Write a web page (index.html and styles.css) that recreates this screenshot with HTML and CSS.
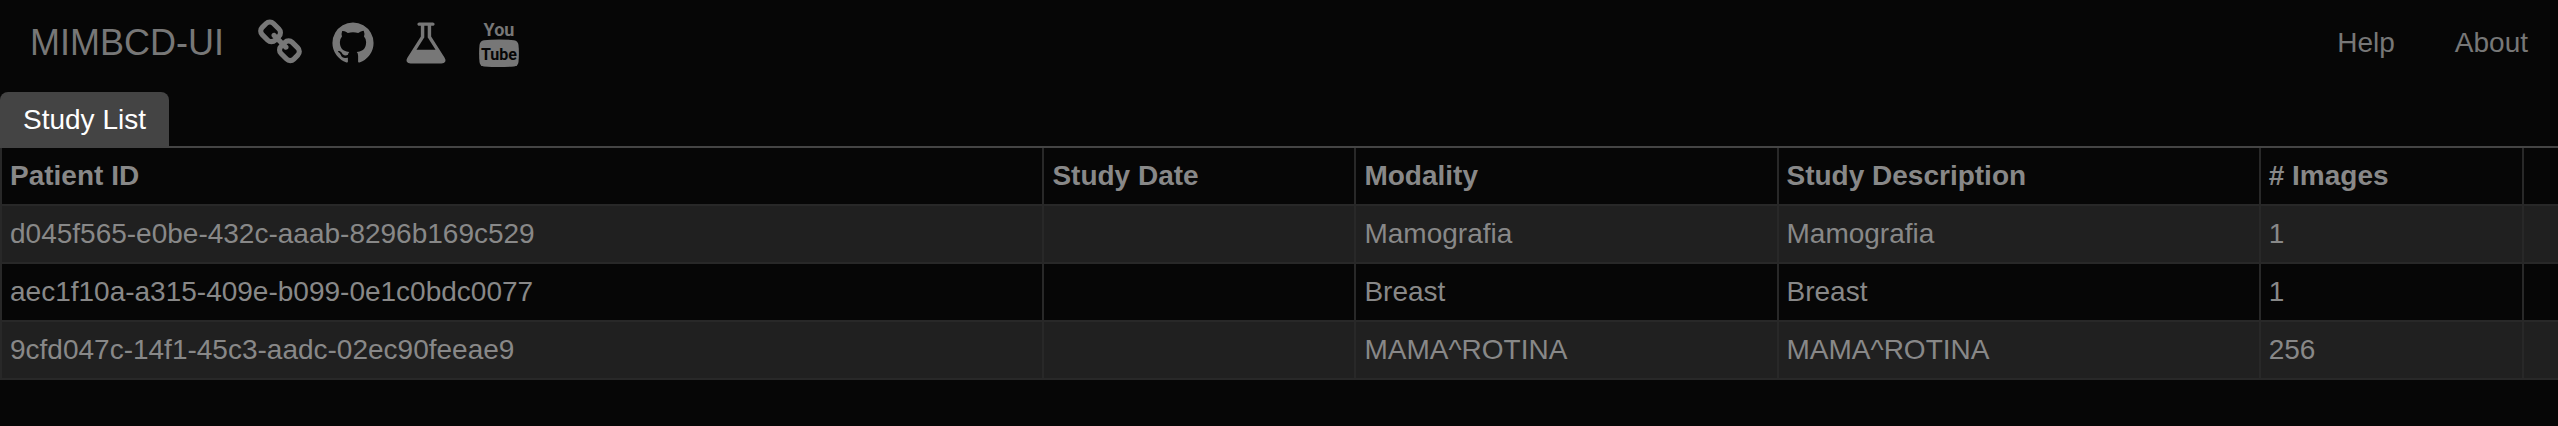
FILE: index.html
```html
<!DOCTYPE html>
<html lang="en">
<head>
<meta charset="utf-8">
<title>MIMBCD-UI</title>
<link rel="stylesheet" href="styles.css">
</head>
<body>
<nav class="navbar">
  <a class="brand" href="#">MIMBCD-UI</a>
  <div class="icon-links">
    <a class="icon-link" href="#" aria-label="Website">
      <svg class="icon" viewBox="0 0 1792 1792"><path d="M1520 1216q0-40-28-68l-208-208q-28-28-68-28-42 0-72 32 3 3 19 18.5t21.5 21.5 15 19 13 25.5 3.5 27.5q0 40-28 68t-68 28q-15 0-27.5-3.5t-25.5-13-19-15-21.5-21.5-18.5-19q-33 31-33 73 0 40 28 68l206 207q27 27 68 27 40 0 68-26l147-146q28-28 28-67zm-703-705q0-40-28-68l-206-207q-28-28-68-28-39 0-68 27l-147 146q-28 28-28 67 0 40 28 68l208 208q27 27 68 27 42 0 72-31-3-3-19-18.5t-21.5-21.5-15-19-13-25.5-3.5-27.5q0-40 28-68t68-28q15 0 27.5 3.5t25.5 13 19 15 21.5 21.5 18.5 19q33-31 33-73zm895 705q0 120-85 203l-147 146q-83 83-203 83-121 0-204-85l-206-207q-83-83-83-203 0-123 88-209l-88-88q-86 88-208 88-120 0-204-84l-208-208q-84-84-84-204t85-203l147-146q83-83 203-83 121 0 204 85l206 207q83 83 83 203 0 123-88 209l88 88q86-88 208-88 120 0 204 84l208 208q84 84 84 204z"/></svg>
    </a>
    <a class="icon-link" href="#" aria-label="GitHub">
      <svg class="icon" viewBox="0 0 1792 1792"><path d="M896 128q209 0 385.5 103t279.5 279.5 103 385.5q0 251-146.5 451.5t-378.5 277.5q-27 5-40-7t-13-30q0-3 .5-76.5t.5-134.5q0-97-52-142 57-6 102.5-18t94-39 81-66.500 53-105 20.5-150.500q0-119-79-206 37-91-8-204-28-9-81 11t-92 44l-38 24q-93-26-192-26t-192 26q-16-11-42.5-27t-83.5-38.500-85-13.500q-45 113-8 204-79 87-79 206 0 85 20.5 150t52.500 105 80.500 67 94 39 102.500 18q-39 36-49 103-21 10-45 15t-57 5-65.500-21.500-55.500-62.500q-19-32-48.500-52t-49.500-24l-20-3q-21 0-29 4.500t-5 11.500 9 14 13 12l7 5q22 10 43.500 38t31.500 51l10 23q13 38 44 61.500t67 30 69.500 7 55.500-3.500l23-4q0 38 .5 88.500t.5 54.500q0 18-13 30t-40 7q-232-77-378.500-277.500t-146.500-451.500q0-209 103-385.500t279.500-279.500 385.500-103z"/></svg>
    </a>
    <a class="icon-link" href="#" aria-label="Research">
      <svg class="icon" viewBox="0 0 1792 1792"><path d="M1591 1448q56 89 21.5 152.5t-140.5 63.5h-1152q-106 0-140.5-63.5t21.5-152.5l503-793v-399h-64q-26 0-45-19t-19-45 19-45 45-19h512q26 0 45 19t19 45-19 45-45 19h-64v399zm-779-725l-272 429h712l-272-429-20-31v-436h-128v436z"/></svg>
    </a>
    <a class="icon-link" href="#" aria-label="YouTube">
      <svg class="icon" viewBox="0 0 48 48">
        <text class="logo-you" x="24" y="17">You</text>
        <path d="M24 20.500Q33 20.500 39 21.200Q43 21.700 43.500 26Q44.300 34 43.500 43Q43 47 39 47.500Q24 48.500 9 47.500Q5 47 4.500 43Q3.700 34 4.500 26Q5 21.700 9 21.200Q15 20.500 24 20.500z"/>
        <text class="logo-tube" x="24" y="41">Tube</text>
      </svg>
    </a>
  </div>
  <div class="nav-links">
    <a class="nav-link" href="#">Help</a>
    <a class="nav-link" href="#">About</a>
  </div>
</nav>
<div class="tabs" role="tablist">
  <button class="tab" type="button" role="tab" aria-selected="true">Study List</button>
</div>
<table class="studies">
  <colgroup>
    <col class="col-patient"><col class="col-date"><col class="col-modality"><col class="col-description"><col class="col-images"><col>
  </colgroup>
  <thead>
    <tr><th>Patient ID</th><th>Study Date</th><th>Modality</th><th>Study Description</th><th># Images</th><th></th></tr>
  </thead>
  <tbody>
    <tr><td>d045f565-e0be-432c-aaab-8296b169c529</td><td></td><td>Mamografia</td><td>Mamografia</td><td>1</td><td></td></tr>
    <tr><td>aec1f10a-a315-409e-b099-0e1c0bdc0077</td><td></td><td>Breast</td><td>Breast</td><td>1</td><td></td></tr>
    <tr><td>9cfd047c-14f1-45c3-aadc-02ec90feeae9</td><td></td><td>MAMA^ROTINA</td><td>MAMA^ROTINA</td><td>256</td><td></td></tr>
  </tbody>
</table>
</body>
</html>
```
FILE: styles.css
```css
* {
  box-sizing: border-box;
}

body {
  margin: 0;
  background: #060606;
  color: #888;
  font-family: "Liberation Sans", Arial, sans-serif;
  font-size: 28px;
  line-height: 40px;
}

a {
  color: #777;
  text-decoration: none;
}

.navbar {
  display: flex;
  align-items: center;
  height: 86px;
  margin-bottom: 6px;
  padding: 0 30px;
}

.brand {
  font-size: 36px;
}

.icon-links {
  display: flex;
  gap: 25px;
  margin-left: 32px;
}

.icon-link {
  display: flex;
}

.icon {
  width: 48px;
  height: 48px;
  fill: #777;
}

.logo-you,
.logo-tube {
  font-family: Roboto, "Liberation Sans", sans-serif;
  font-weight: bold;
  text-anchor: middle;
}

.logo-you {
  font-size: 18px;
}

.logo-tube {
  font-size: 16px;
  fill: #060606;
}

.nav-links {
  display: flex;
  gap: 60px;
  margin-left: auto;
}

.tabs {
  display: flex;
  border-bottom: 2px solid #444;
}

.tab {
  padding: 8px 23px 6px;
  border: 0;
  border-radius: 8px 8px 0 0;
  background: #444;
  color: #fff;
  font: inherit;
}

.studies {
  width: 100%;
  table-layout: fixed;
  border-spacing: 0;
}

.col-patient { width: 40.75%; }
.col-date { width: 12.2%; }
.col-modality { width: 16.5%; }
.col-description { width: 18.85%; }
.col-images { width: 10.3%; }

.studies th,
.studies td {
  height: 58px;
  padding: 8px;
  border-left: 2px solid #282828;
  border-bottom: 2px solid #282828;
  text-align: left;
}

.studies tbody tr:nth-child(odd) {
  background: #202020;
}
```
